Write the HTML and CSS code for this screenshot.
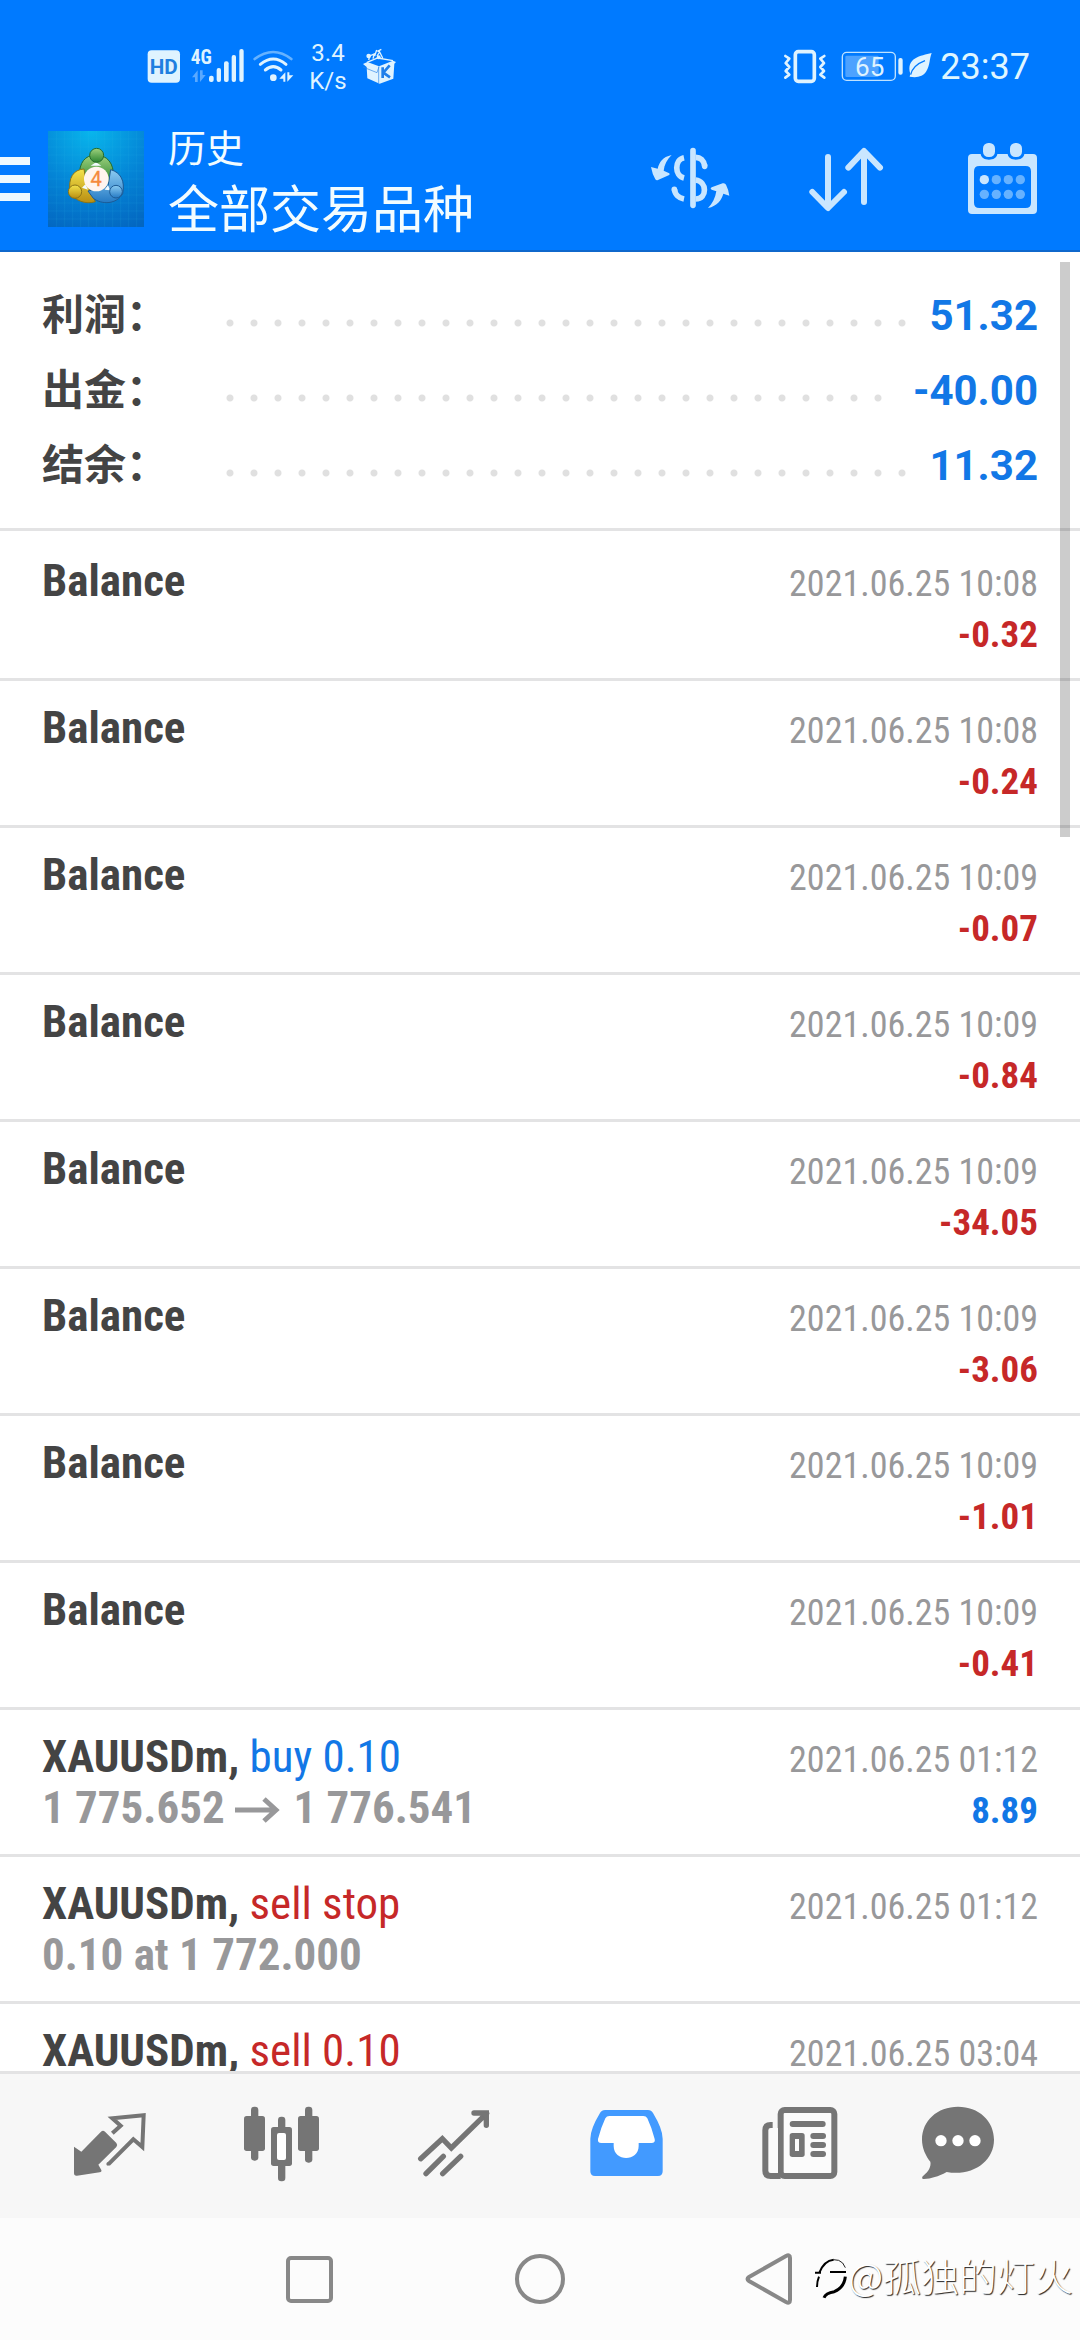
FILE: index.html
```html
<!DOCTYPE html>
<html lang="zh-CN">
<head>
<meta charset="utf-8">
<meta name="viewport" content="width=device-width">
<title>历史</title>
<link rel="stylesheet" href="styles.css">
</head>
<body>
<div class="app">
  <header class="header">
    <div class="status">
      <div class="status-side">
        <svg class="s-hd" viewBox="51 48 99 120"><rect x="53" y="61" width="97" height="97" rx="12" fill="#dff3ff"/><text x="101" y="131" class="hd-text">HD</text></svg>
        <svg class="s-signal" viewBox="177 48 165 120"><text x="182" y="101" class="net-text">4G</text>
          <g fill="#dff3ff"><rect x="237" y="137" width="14" height="19" rx="6"/><rect x="260" y="114" width="13" height="42" rx="6"/><rect x="282" y="94" width="14" height="62" rx="6"/><rect x="305" y="75" width="13" height="81" rx="6"/><rect x="328" y="57" width="13" height="99" rx="6"/></g>
          <g fill="#5aa9ff"><path d="M203 156V121l-17 21h9v14z"/><path d="M210 121v35l17-21h-9v-14z"/></g></svg>
        <svg class="s-wifi" viewBox="369 48 123 120"><g fill="none" stroke-linecap="round"><path d="M374 87q56-42 110 0" stroke="#66b2ff" stroke-width="8"/><path d="M391 103q39-32 77 0M406 120q24-20 47 0" stroke="#dff3ff" stroke-width="9"/></g><circle cx="430" cy="143" r="10" fill="#dff3ff"/><path fill="#dff3ff" d="M466 127v28h-6v-9h-12zM472 127h6v9h12l-18 19z"/></svg>
        <div class="speed"><span>3.4</span><span>K/s</span></div>
        <svg class="s-box" viewBox="696 48 99 120"><path fill="#dff3ff" d="M712 96l35 13 42-17 9 4-5 5-3 45-41 15-37-16-2-34-11-9z"/><path fill="none" stroke="#dff3ff" stroke-width="4" d="M711 97l32-13 46 8M716 90l3-12 14-6-4 14M740 60l-6 18M741 78l8-12 9 18M742 64l12-6"/><circle cx="716" cy="78" r="7" fill="#dff3ff"/><circle cx="746" cy="82" r="6" fill="#dff3ff"/><path fill="none" stroke="#2f87e8" stroke-width="2" d="M746 110v49M747 110l-6 18-42-17"/><path fill="none" stroke="#1f7fea" stroke-width="8" d="M758 112v32M779 106l-19 22 20 14"/></svg>
      </div>
      <div class="status-side status-right">
        <svg class="s-vibrate" viewBox="39 48 153 120"><g fill="none" stroke="#dff3ff" stroke-linejoin="round" stroke-linecap="round"><rect x="76" y="65" width="57" height="89" rx="9" stroke-width="11"/><path stroke-width="8" d="M46 78l12 8-11 13 11 12-11 12 11 11-12 9M163 78l-12 8 11 13-11 12 11 12-11 11 12 9"/></g></svg>
        <svg class="s-battery" viewBox="210 48 186 120"><rect x="217" y="67" width="159" height="84" rx="13" fill="none" stroke="#bfe2ff" stroke-width="4"/><rect x="226" y="77" width="100" height="64" rx="4" fill="#4da2ff"/><text x="299" y="137" class="batt-text">65</text><rect x="385" y="84" width="13" height="50" rx="6" fill="#dff3ff"/></svg>
        <svg class="s-leaf" viewBox="414 48 78 120"><path fill="#dff3ff" d="M485 69C452 77 407 84 421 131l-2 9c22 4 40 0 50-16 11-18 9-37 16-55z"/><path fill="none" stroke="#007aff" stroke-width="4" d="M422 134c5-22 22-34 43-42"/></svg>
        <span class="clock">23:37</span>
      </div>
    </div>
    <div class="appbar">
      <button class="menu" aria-label="菜单"><i></i><i></i><i></i></button>
      <svg class="logo" viewBox="144 36 288 288">
        <defs>
          <radialGradient id="bg" cx=".45" cy="0" r="1.1"><stop offset="0" stop-color="#08b6ec"/><stop offset=".55" stop-color="#0484d6"/><stop offset="1" stop-color="#0366c0"/></radialGradient>
          <linearGradient id="gr" x2="0" y2="1"><stop offset="0" stop-color="#9fd27e"/><stop offset="1" stop-color="#2c8531"/></linearGradient>
          <linearGradient id="ye" x2="0" y2="1"><stop offset="0" stop-color="#f4e34b"/><stop offset="1" stop-color="#b98e12"/></linearGradient>
          <linearGradient id="bl" x2="0" y2="1"><stop offset="0" stop-color="#8cccf2"/><stop offset="1" stop-color="#2479c4"/></linearGradient>
        </defs>
        <rect x="144" y="36" width="288" height="288" fill="url(#bg)"/>
        <path stroke="#3fc0f0" stroke-opacity=".18" stroke-width="2" d="M170 36v288M194 36v288M218 36v288M242 36v288M266 36v288M290 36v288M314 36v288M338 36v288M362 36v288M386 36v288M410 36v288M144 60h288M144 84h288M144 108h288M144 132h288M144 156h288M144 180h288M144 204h288M144 228h288M144 252h288M144 276h288M144 300h288"/>
        <path d="M238 170c0-38 16-62 50-62s54 26 52 64l-14 20-80-10z" fill="url(#gr)" stroke="#236b2c" stroke-width="3"/>
        <path d="M252 150c-32 2-48 26-42 70 12 24 48 38 76 28l-28-60z" fill="url(#ye)" stroke="#8b7416" stroke-width="3"/>
        <path d="M332 152c30 8 44 34 36 72-18 32-62 34-88 14l-16-22 60-14z" fill="url(#bl)" stroke="#1c5b96" stroke-width="3"/>
        <path d="M272 140l16-10 16 10zM246 206l10-10 8 16zM324 198l6 16-16-2z" fill="#f2fbff"/>
        <circle cx="290" cy="109" r="21" fill="url(#gr)" stroke="#236b2c" stroke-width="3"/>
        <circle cx="225" cy="218" r="20" fill="url(#ye)" stroke="#8b7416" stroke-width="3"/>
        <circle cx="348" cy="218" r="19" fill="url(#bl)" stroke="#1c5b96" stroke-width="3"/>
        <circle cx="289" cy="180" r="37" fill="#fff5ef"/>
        <text x="288" y="202" class="logo-text">4</text>
      </svg>
      <div class="titles"><span class="title-small">历史</span><h1 class="title-main">全部交易品种</h1></div>
      <div class="actions">
        <button aria-label="货币"><svg viewBox="54 51 252 252"><g fill="none" stroke="#c9e6ff" stroke-width="17"><path d="M162 113c-29 6-29 54 0 61M134 208c0 15 13 26 28 29"/><path d="M197 112c14 0 25 9 27 26M197 180c34 4 36 56 0 57" /><path d="M189 92V256M224 137v2M133 209v-1" stroke-linecap="round"/></g><path fill="#c9e6ff" d="M125 105c-28 6-37 22-42 41l-20-5q4 22 13 37 3 4 8 2l32-14q6-4 0-7l-15-7c2-18 10-33 24-47zM234 264c28-6 41-25 46-43l18 6q-3-20-10-33-3-6-10-4l-33 12q-6 4 0 7l14 5c-3 20-12 37-25 50z"/></svg></button>
        <button aria-label="排序"><svg viewBox="522 51 252 252"><path fill="none" stroke="#c9e6ff" stroke-width="18" stroke-linecap="round" stroke-linejoin="round" d="M594 111v152M547 216l47 48 48-48M702 246V94M655 143l47-50 48 50"/></svg></button>
        <button aria-label="日历"><svg viewBox="990 51 252 252"><path fill="#c9e6ff" fill-rule="evenodd" d="M1026 102h26c2 12 12 17 25 17s23-5 25-17h31c2 12 12 17 25 17s23-5 25-17h26q12 0 12 12v156q0 12-12 12h-183q-12 0-12-12V114q0-12 12-12zM1048 138q-16 0-16 16v94q0 16 16 16h139q16 0 16-16v-94q0-16-16-16z"/><rect x="1059" y="69" width="36" height="42" rx="16" fill="#c9e6ff"/><rect x="1140" y="69" width="36" height="42" rx="16" fill="#c9e6ff"/><circle cx="1063" cy="179" r="14" fill="#c9e6ff"/><g fill="#66b2ff"><circle cx="1099" cy="179" r="14"/><circle cx="1135" cy="179" r="14"/><circle cx="1171" cy="179" r="14"/><circle cx="1063" cy="223" r="14"/><circle cx="1099" cy="223" r="14"/><circle cx="1135" cy="223" r="14"/><circle cx="1171" cy="223" r="14"/></g></svg></button>
      </div>
    </div>
  </header>

  <main class="history">
    <div class="scrollbar"></div>
    <dl class="summary">
      <div class="sum-row"><dt>利润：</dt><dd class="leader"></dd><dd>51.32</dd></div>
      <div class="sum-row"><dt>出金：</dt><dd class="leader"></dd><dd>-40.00</dd></div>
      <div class="sum-row"><dt>结余：</dt><dd class="leader"></dd><dd>11.32</dd></div>
    </dl>
    <ul class="deals">
      <li class="deal"><b class="name">Balance</b><time class="date">2021.06.25 10:08</time><b class="amount loss">-0.32</b></li>
      <li class="deal"><b class="name">Balance</b><time class="date">2021.06.25 10:08</time><b class="amount loss">-0.24</b></li>
      <li class="deal"><b class="name">Balance</b><time class="date">2021.06.25 10:09</time><b class="amount loss">-0.07</b></li>
      <li class="deal"><b class="name">Balance</b><time class="date">2021.06.25 10:09</time><b class="amount loss">-0.84</b></li>
      <li class="deal"><b class="name">Balance</b><time class="date">2021.06.25 10:09</time><b class="amount loss">-34.05</b></li>
      <li class="deal"><b class="name">Balance</b><time class="date">2021.06.25 10:09</time><b class="amount loss">-3.06</b></li>
      <li class="deal"><b class="name">Balance</b><time class="date">2021.06.25 10:09</time><b class="amount loss">-1.01</b></li>
      <li class="deal"><b class="name">Balance</b><time class="date">2021.06.25 10:09</time><b class="amount loss">-0.41</b></li>
      <li class="deal"><b class="name">XAUUSDm, <span class="side buy">buy 0.10</span></b><time class="date">2021.06.25 01:12</time><b class="prices">1 775.652 <svg class="arrow" viewBox="0 0 45 26"><path d="M0 13h42M29 2l12 11-12 11" fill="none" stroke="#98989a" stroke-width="5"/></svg> 1 776.541</b><b class="amount gain">8.89</b></li>
      <li class="deal"><b class="name">XAUUSDm, <span class="side sell">sell stop</span></b><time class="date">2021.06.25 01:12</time><b class="prices">0.10 at 1 772.000</b></li>
      <li class="deal"><b class="name">XAUUSDm, <span class="side sell">sell 0.10</span></b><time class="date">2021.06.25 03:04</time></li>
    </ul>
  </main>

  <nav class="tabs">
    <button aria-label="行情"><svg viewBox="66 114 288 288"><path fill="#757575" d="M102 260l22 15 59-60q6-5 12 0l34 34q5 6 0 12l-54 53 9 16q2 6-5 7l-68 10q-9 1-9-8z"/><path fill="none" stroke="#757575" stroke-width="12" d="M217 220l25-23-25-22 94-9-4 95-27-23-75 75"/><circle cx="204" cy="312" r="5" fill="#757575"/></svg></button>
    <button aria-label="图表"><svg viewBox="582 114 288 288"><g fill="#757575"><rect x="612" y="168" width="63" height="105" rx="8"/><rect x="633" y="140" width="22" height="162" rx="10"/><rect x="774" y="168" width="63" height="105" rx="8"/><rect x="795" y="140" width="22" height="168" rx="10"/><rect x="714" y="170" width="22" height="194" rx="10"/><rect x="693" y="201" width="63" height="117" rx="8"/></g><rect x="711" y="219" width="27" height="81" rx="6" fill="#fff"/></svg></button>
    <button aria-label="交易"><svg viewBox="1098 114 288 288"><path fill="none" stroke="#757575" stroke-width="16" stroke-linecap="round" d="M1142 296l65-60 27 28 106-104M1302 159h37v37M1158 341l52-52M1208 341l54-52"/><path fill="#757575" d="M1318 157h24v28z"/></svg></button>
    <button aria-label="历史"><svg viewBox="114 114 288 288"><path fill="#429aff" d="M195 150h129q10 0 15 9 29 48 29 77v98q0 14-14 14H165q-14 0-14-14v-98q0-29 29-77 5-9 15-9z"/><path fill="#fff" d="M208 168q-8 0-12 7-14 30-22 62-2 12 10 12h37v9c0 48 75 48 75 0v-9h38q13 0 10-12-8-32-22-62-4-7-12-7z"/></svg></button>
    <button aria-label="新闻"><svg viewBox="630 114 288 288"><rect x="722" y="150" width="161" height="198" rx="12" fill="#fbfbfb" stroke="#757575" stroke-width="18"/><path fill="#fbfbfb" d="M684 204h30v135h-30z"/><path fill="none" stroke="#757575" stroke-width="18" d="M698 195h-6q-16 0-16 16v121q0 16 16 16h30"/><g fill="#757575"><rect x="749" y="183" width="108" height="18" rx="9"/><rect x="811" y="219" width="47" height="18" rx="9"/><rect x="811" y="246" width="47" height="18" rx="9"/><rect x="811" y="273" width="47" height="18" rx="9"/><rect x="749" y="219" width="45" height="72" rx="8"/></g><rect x="765" y="237" width="12" height="36" fill="#fbfbfb"/></svg></button>
    <button aria-label="消息"><svg viewBox="1146 114 288 288"><path fill="#757575" d="M1254 140c62 0 108 42 108 99 0 66-66 111-142 97-26 14-46 20-68 21-7 0-7-6-2-10 16-13 24-28 21-42-14-18-25-41-25-66 0-57 46-99 108-99z"/><g fill="#fff"><circle cx="1203" cy="242" r="17"/><circle cx="1254" cy="242" r="17"/><circle cx="1305" cy="242" r="17"/></g></svg></button>
  </nav>

  <footer class="sysnav">
    <button aria-label="最近任务"><svg viewBox="0 0 54 54"><rect x="6" y="6" width="43" height="43" rx="3"/></svg></button>
    <button aria-label="主页"><svg viewBox="0 0 54 54"><circle cx="27" cy="27" r="23"/></svg></button>
    <button aria-label="返回"><svg viewBox="0 0 54 54"><path d="M5 25L42 4q4-2 4 2v42q0 4-4 2L5 29q-3-2 0-4z"/></svg></button>
    <div class="watermark"><svg viewBox="238 82 102 126"><path fill="none" stroke="#000" stroke-width="6" d="M241 126h18M254 126q14-36 43-39M286 124h48M253 138q-6 14-6 31"/><path fill="none" stroke="#000" stroke-width="9" d="M332 138q-3 32-33 45-26 4-31 18"/><path fill="none" stroke="#222" stroke-width="3" d="M296 87q18-1 28 10l8 14"/></svg><span>@孤独的灯火</span></div>
  </footer>
</div>
</body>
</html>
```

FILE: styles.css
```css
* { box-sizing: border-box; }

body {
  margin: 0;
  background: #fff;
  font-family: Roboto, "Noto Sans CJK SC", sans-serif;
}

button {
  border: 0;
  padding: 0;
  background: none;
}

svg { display: block; overflow: visible; }

.app {
  display: flex;
  flex-direction: column;
  height: 100vh;
}

/* header */
.header {
  flex: none;
  background: #007aff;
  border-bottom: 2px solid #0f68cc;
}

.status {
  display: flex;
  align-items: center;
  justify-content: space-between;
  height: 108px;
  padding: 24px 50px 0 147px;
}

.status svg { height: 40px; }

.status-side { display: flex; align-items: center; gap: 9px; }
.status-right { gap: 6px; }

.s-hd { width: 33px; }
.s-signal { width: 55px; }
.s-wifi { width: 41px; }
.s-box { width: 33px; }
.s-vibrate { width: 51px; }
.s-battery { width: 62px; }
.s-leaf { width: 26px; }

.hd-text { font: 700 62px Roboto, sans-serif; fill: #1f7fe0; text-anchor: middle; }
.net-text { font: 700 58px "Roboto Condensed", Roboto, sans-serif; fill: #dff3ff; }
.batt-text { font: 400 78px Roboto, sans-serif; fill: #dff3ff; text-anchor: middle; }

.speed {
  display: flex;
  flex-direction: column;
  align-items: center;
  width: 50px;
  padding-top: 2px;
  font-size: 24px;
  line-height: 28px;
  color: #dff3ff;
}

.clock { padding-top: 2px; font-size: 36px; line-height: 40px; color: #dff6ff; }

.appbar {
  display: flex;
  align-items: center;
  height: 142px;
  padding-right: 36px;
}

.menu {
  display: flex;
  flex-direction: column;
  gap: 10px;
  width: 30px;
  margin-right: 18px;
}

.menu i { height: 8px; background: #edf9ff; }

.logo { width: 96px; height: 96px; }
.logo-text { font: 400 60px Roboto, sans-serif; fill: #f58a3c; stroke: #f58a3c; text-anchor: middle; }

.titles {
  display: flex;
  flex-direction: column;
  margin-left: 24px;
  padding-bottom: 6px;
  color: #f2fcff;
  font-family: "Noto Sans CJK SC", sans-serif;
  line-height: 60px;
}

.title-small { font-size: 38px; }
.title-main { margin: 0; font-size: 51px; font-weight: 400; line-height: 60px; }

.actions { display: flex; gap: 72px; margin-left: auto; }
.actions svg { width: 84px; height: 84px; }

/* history list */
.history {
  position: relative;
  flex: 1;
  min-height: 0;
  overflow: hidden;
}

.scrollbar {
  position: absolute;
  top: 10px;
  right: 10px;
  width: 10px;
  height: 575px;
  background: rgba(0, 0, 0, .2);
}

.summary {
  margin: 0;
  padding: 26px 42px 25px;
  border-bottom: 3px solid #e3e3e4;
}

.sum-row {
  display: flex;
  height: 75px;
  font-size: 42px;
  font-weight: 700;
  line-height: 75px;
}

.sum-row dt { width: 176px; color: #444; }
.sum-row dd { margin: 0; color: #1277e6; }

.sum-row .leader {
  flex: 1;
  margin-right: 18px;
  background: radial-gradient(circle at 12px 45px, #e0e0e0 3px, transparent 4px) 0 0 / 24px 75px repeat-x;
}

.deals { margin: 0; padding: 3px 0 0; list-style: none; }

.deal {
  display: grid;
  grid-template-columns: 1fr auto;
  grid-template-rows: 51px 51px;
  align-items: baseline;
  padding: 21px 42px;
  border-bottom: 3px solid #e3e3e4;
  font-family: "Roboto Condensed", Roboto, sans-serif;
  line-height: 51px;
}

.name { font-size: 45px; color: #444; }
.side { font-weight: 400; }
.date { font-size: 36px; color: #98989a; text-align: right; }
.prices { grid-column: 1; font-size: 45px; color: #98989a; }
.amount { grid-column: 2; font-size: 37px; line-height: 57px; text-align: right; }
.arrow { display: inline-block; width: 45px; height: 26px; margin-right: 3px; }
.loss, .sell { color: #c62828; }
.gain, .buy { color: #1277e6; }

/* bottom tabs */
.tabs {
  display: flex;
  flex: none;
  height: 147px;
  padding: 0 24px;
  border-top: 3px solid #e3e3e4;
  background: #f7f7f7;
}

.tabs button { flex: 1; display: flex; align-items: center; justify-content: center; }
.tabs svg { width: 96px; height: 96px; }

/* system navigation */
.sysnav {
  position: relative;
  display: flex;
  flex: none;
  align-items: center;
  justify-content: center;
  gap: 177px;
  height: 122px;
  background: #fcfcfc;
}

.sysnav button svg {
  width: 54px;
  height: 54px;
  fill: none;
  stroke: #888;
  stroke-width: 4px;
}

.watermark {
  position: absolute;
  right: 7px;
  top: 32px;
  display: flex;
  align-items: center;
  font-family: "Noto Sans CJK SC", sans-serif;
  font-size: 38px;
  font-weight: 300;
  line-height: 50px;
  color: #fff;
  text-shadow: 1px 1px 1px #222;
}

.watermark svg { width: 34px; height: 42px; margin-top: 8px; }
```
